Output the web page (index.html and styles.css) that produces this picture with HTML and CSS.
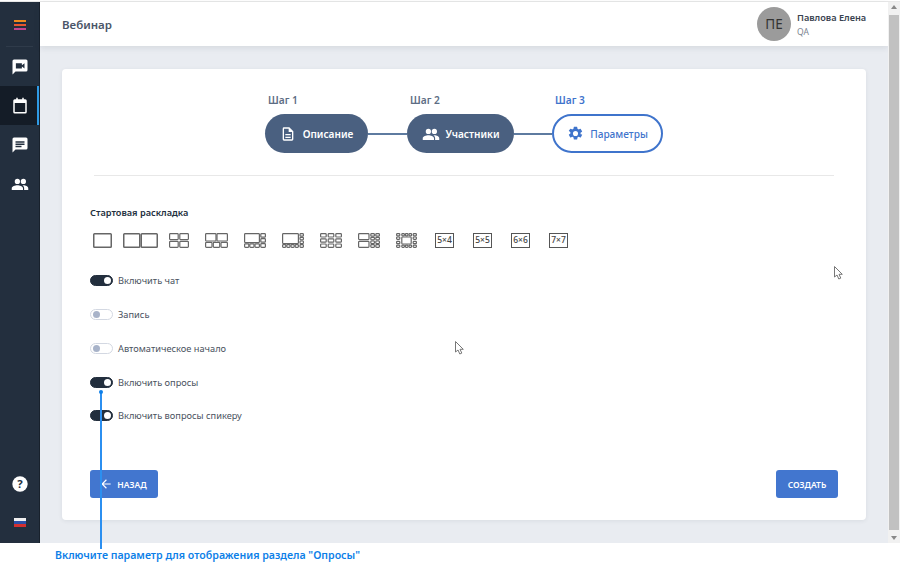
FILE: index.html
```html
<!DOCTYPE html>
<html lang="ru">
<head>
<meta charset="utf-8">
<title>Вебинар</title>
<link rel="stylesheet" href="styles.css">
</head>
<body>
<div class="app">
  <aside class="sidebar">
    <div class="burger"><i class="b1"></i><i class="b2"></i><i class="b3"></i></div>
    <nav class="nav">
      <a class="nav-item"><svg viewBox="0 0 24 24" class="ico"><path d="M4 2h16a2 2 0 0 1 2 2v12a2 2 0 0 1-2 2H6l-4 4V4a2 2 0 0 1 2-2zm2.500 5v7h8v-2.600l3.500 2.600V7l-3.500 2.600V7z" fill-rule="evenodd"/></svg></a>
      <a class="nav-item active"><svg viewBox="0 0 24 24" class="ico"><path d="M7 1h2v2h6V1h2v2h2a2 2 0 0 1 2 2v15a2 2 0 0 1-2 2H5a2 2 0 0 1-2-2V5a2 2 0 0 1 2-2h2zM5 8v12h14V8z" fill-rule="evenodd"/></svg></a>
      <a class="nav-item"><svg viewBox="0 0 24 24" class="ico"><path d="M4 2h16a2 2 0 0 1 2 2v12a2 2 0 0 1-2 2H6l-4 4V4a2 2 0 0 1 2-2zm2 5v2h12V7zm0 3v2h12v-2zm0 3v2h8v-2z" fill-rule="evenodd"/></svg></a>
      <a class="nav-item"><svg viewBox="0 0 24 24" class="ico"><path d="M8.500 5a3.500 3.500 0 1 1 0 7 3.500 3.500 0 0 1 0-7zm8 0a3.300 3.300 0 1 1 0 7 3.300 3.300 0 0 1 0-7zM8.500 13.500c2.900 0 7.500 1.400 7.500 4V20H1v-2.500c0-2.600 4.600-4 7.500-4zm8 0c2.900 0 6.500 1.400 6.500 4V20h-5.500v-2.500c0-1.600-.9-2.900-2.300-3.800.6-.1 1.200-.2 1.300-.2z"/></svg></a>
    </nav>
    <div class="side-bottom">
      <a class="nav-item small"><svg viewBox="0 0 24 24" class="ico help"><circle cx="12" cy="12" r="11.500" fill="#fff"/><text x="12" y="18" text-anchor="middle" class="qmark">?</text></svg></a>
      <a class="nav-item small"><span class="flag"><i class="f1"></i><i class="f2"></i><i class="f3"></i></span></a>
    </div>
  </aside>

  <div class="main">
    <header class="topbar">
      <h1 class="title">Вебинар</h1>
      <div class="user">
        <div class="avatar">ПЕ</div>
        <div class="user-text">
          <div class="user-name">Павлова Елена</div>
          <div class="user-role">QA</div>
        </div>
      </div>
    </header>
    <main class="content">
      <section class="card">
        <div class="steps">
          <div class="step">
            <div class="step-label">Шаг 1</div>
            <div class="pill w1"><svg viewBox="0 0 24 24" class="pill-ico"><path d="M6 2h8l6 6v12a2 2 0 0 1-2 2H6a2 2 0 0 1-2-2V4a2 2 0 0 1 2-2zm0 2v16h12V9h-5V4zm2 8h8v2H8zm0 4h8v2H8z" fill-rule="evenodd"/></svg>Описание</div>
          </div>
          <div class="connector"></div>
          <div class="step">
            <div class="step-label">Шаг 2</div>
            <div class="pill w2"><svg viewBox="0 0 24 24" class="pill-ico wide"><path d="M8.500 5a3.500 3.500 0 1 1 0 7 3.500 3.500 0 0 1 0-7zm8 0a3.300 3.300 0 1 1 0 7 3.300 3.300 0 0 1 0-7zM8.500 13.500c2.900 0 7.500 1.400 7.500 4V20H1v-2.500c0-2.600 4.600-4 7.500-4zm8 0c2.900 0 6.500 1.400 6.500 4V20h-5.500v-2.500c0-1.600-.9-2.900-2.300-3.800.6-.1 1.200-.2 1.300-.2z"/></svg>Участники</div>
          </div>
          <div class="connector short"></div>
          <div class="step current">
            <div class="step-label">Шаг 3</div>
            <div class="pill w3"><svg viewBox="0 0 24 24" class="pill-ico gear"><path d="M19.140 12.940a7.500 7.500 0 0 0 0-1.880l2.030-1.580a.5.500 0 0 0 .12-.64l-1.920-3.320a.5.500 0 0 0-.6-.22l-2.390.96a7 7 0 0 0-1.620-.94l-.36-2.540a.5.500 0 0 0-.5-.42h-3.840a.5.500 0 0 0-.5.420l-.36 2.540a7 7 0 0 0-1.620.94l-2.390-.96a.5.500 0 0 0-.6.220L2.690 7.840a.5.500 0 0 0 .12.640l2.030 1.580a7.500 7.500 0 0 0 0 1.880l-2.030 1.580a.5.500 0 0 0-.12.640l1.920 3.320a.5.500 0 0 0 .6.220l2.390-.96c.5.380 1.040.700 1.620.94l.36 2.540a.5.500 0 0 0 .5.420h3.840a.5.500 0 0 0 .5-.42l.36-2.540a7 7 0 0 0 1.620-.94l2.390.96a.5.500 0 0 0 .6-.22l1.920-3.320a.5.500 0 0 0-.12-.64zM12 15.600a3.600 3.600 0 1 1 0-7.200 3.600 3.600 0 0 1 0 7.200z"/></svg>Параметры</div>
          </div>
        </div>
        <hr class="divider">
        <div class="layout-title">Стартовая раскладка</div>
        <div class="layouts">
          <svg class="lay tight" width="19" height="15" viewBox="0 0 19 15"><rect x=".75" y=".75" width="17.500" height="13.500"/></svg>
          <svg class="lay tight" width="35" height="15" viewBox="0 0 35 15"><rect x=".75" y=".75" width="16" height="13.500"/><rect x="18.250" y=".75" width="16" height="13.500"/></svg>
          <svg class="lay" width="20" height="15" viewBox="0 0 20 15"><rect x=".6" y=".6" width="8.600" height="6"/><rect x="10.800" y=".6" width="8.600" height="6"/><rect x=".6" y="8.400" width="8.600" height="6"/><rect x="10.800" y="8.400" width="8.600" height="6"/></svg>
          <svg class="lay" width="23" height="15" viewBox="0 0 23 15"><rect x=".6" y=".6" width="10.400" height="7.400"/><rect x="12" y=".6" width="10.400" height="7.400"/><rect x=".6" y="9.400" width="6.400" height="5"/><rect x="8.300" y="9.400" width="6.400" height="5"/><rect x="16" y="9.400" width="6.400" height="5"/></svg>
          <svg class="lay" width="22" height="15" viewBox="0 0 22 15"><rect x=".6" y=".6" width="14.800" height="9"/><rect x="16.800" y=".6" width="4.600" height="3.600"/><rect x="16.800" y="5.600" width="4.600" height="3.600"/><rect x="16.800" y="10.600" width="4.600" height="3.800"/><rect x=".6" y="10.800" width="4.200" height="3.600"/><rect x="5.800" y="10.800" width="4.200" height="3.600"/><rect x="11" y="10.800" width="4.400" height="3.600"/></svg>
          <svg class="lay" width="22" height="15" viewBox="0 0 22 15"><rect x=".6" y=".6" width="15.800" height="10"/><rect x="18" y=".6" width="3.400" height="2.600"/><rect x="18" y="4.300" width="3.400" height="2.600"/><rect x="18" y="8" width="3.400" height="2.600"/><rect x="18" y="11.700" width="3.400" height="2.700"/><rect x=".6" y="11.700" width="3.200" height="2.700"/><rect x="4.800" y="11.700" width="3.200" height="2.700"/><rect x="9" y="11.700" width="3.200" height="2.700"/><rect x="13.200" y="11.700" width="3.200" height="2.700"/></svg>
          <svg class="lay" width="22" height="15" viewBox="0 0 22 15"><rect x=".6" y=".6" width="5.600" height="3.400"/><rect x="8.200" y=".6" width="5.600" height="3.400"/><rect x="15.800" y=".6" width="5.600" height="3.400"/><rect x=".6" y="5.800" width="5.600" height="3.400"/><rect x="8.200" y="5.800" width="5.600" height="3.400"/><rect x="15.800" y="5.800" width="5.600" height="3.400"/><rect x=".6" y="11" width="5.600" height="3.400"/><rect x="8.200" y="11" width="5.600" height="3.400"/><rect x="15.800" y="11" width="5.600" height="3.400"/></svg>
          <svg class="lay" width="22" height="15" viewBox="0 0 22 15"><rect x=".6" y=".6" width="10.400" height="6"/><rect x=".6" y="8.400" width="10.400" height="6"/><rect x="12.800" y=".6" width="3.600" height="2.600"/><rect x="17.800" y=".6" width="3.600" height="2.600"/><rect x="12.800" y="4.300" width="3.600" height="2.600"/><rect x="17.800" y="4.300" width="3.600" height="2.600"/><rect x="12.800" y="8" width="3.600" height="2.600"/><rect x="17.800" y="8" width="3.600" height="2.600"/><rect x="12.800" y="11.700" width="3.600" height="2.700"/><rect x="17.800" y="11.700" width="3.600" height="2.700"/></svg>
          <svg class="lay wide-gap" width="21" height="15" viewBox="0 0 21 15"><rect x="5.800" y="4" width="9.400" height="7"/><rect x=".6" y=".6" width="3.200" height="2.300"/><rect x="5.800" y=".6" width="2.600" height="2.300"/><rect x="9.400" y=".6" width="2.600" height="2.300"/><rect x="13" y=".6" width="2.600" height="2.300"/><rect x="17.200" y=".6" width="3.200" height="2.300"/><rect x=".6" y="4" width="3.200" height="2.300"/><rect x="17.200" y="4" width="3.200" height="2.300"/><rect x=".6" y="8.400" width="3.200" height="2.300"/><rect x="17.200" y="8.400" width="3.200" height="2.300"/><rect x=".6" y="12.100" width="3.200" height="2.300"/><rect x="5.800" y="12.100" width="2.600" height="2.300"/><rect x="9.400" y="12.100" width="2.600" height="2.300"/><rect x="13" y="12.100" width="2.600" height="2.300"/><rect x="17.200" y="12.100" width="3.200" height="2.300"/></svg>
          <div class="lay-text">5×4</div>
          <div class="lay-text">5×5</div>
          <div class="lay-text">6×6</div>
          <div class="lay-text">7×7</div>
        </div>
        <div class="toggles">
          <label class="row"><span class="switch on"></span>Включить чат</label>
          <label class="row"><span class="switch"></span>Запись</label>
          <label class="row"><span class="switch"></span>Автоматическое начало</label>
          <label class="row"><span class="switch on"></span>Включить опросы</label>
          <label class="row"><span class="switch on"></span>Включить вопросы спикеру</label>
        </div>
        <div class="actions">
          <button class="btn back"><svg viewBox="0 0 24 24" class="arrow"><path d="M20 11H7.800l5.600-5.600L12 4l-8 8 8 8 1.400-1.400L7.800 13H20z"/></svg>НАЗАД</button>
          <button class="btn create">СОЗДАТЬ</button>
        </div>
      </section>
    </main>
  </div>

  <div class="scrollbar">
    <span class="arr up"></span>
    <div class="thumb"></div>
    <span class="arr down"></span>
  </div>
</div>
<p class="note">Включите параметр для отображения раздела "Опросы"</p>

<div class="callout"></div>
<svg class="cursor c1" width="10" height="14" viewBox="0 0 10 14"><path d="M.5.500v10.500l2.500-2 1.800 4 2-.9-1.800-3.800h3.300z"/></svg>
<svg class="cursor c2" width="10" height="14" viewBox="0 0 10 14"><path d="M.5.500v10.500l2.500-2 1.800 4 2-.9-1.800-3.800h3.300z"/></svg>
</body>
</html>
```
FILE: styles.css
```css
* { box-sizing: border-box; }
html, body { margin: 0; padding: 0; }
body {
  width: 900px;
  height: 566px;
  overflow: hidden;
  position: relative;
  background: #fff;
  font-family: "Noto Sans", "Open Sans", sans-serif;
  color: #2c3a4b;
}
.app {
  display: flex;
  height: 542px;
  margin-top: 1px;
  border-top: 1px solid #e8e8e8;
}
.sidebar {
  width: 40px;
  flex: none;
  background: #232f3e;
  border-right: 1px solid #18212c;
  display: flex;
  flex-direction: column;
}
.burger {
  height: 45px;
  padding-top: 18px;
  display: flex;
  flex-direction: column;
  align-items: center;
  gap: 2px;
  position: relative;
}
.burger::after {
  content: "";
  position: absolute;
  left: 6px;
  right: 6px;
  bottom: 0;
  height: 1px;
  background: #2f3b4a;
}
.burger i { display: block; width: 12px; height: 2px; margin-left: 1px; }
.b1 { background: #ee8a1d; }
.b2 { background: #e4572e; }
.b3 { background: #c2458f; }
.nav { display: flex; flex-direction: column; }
.nav-item {
  height: 39px;
  display: flex;
  align-items: center;
  justify-content: center;
}
.nav-item.active {
  background: #141c27;
  border-right: 2px solid #2f9be6;
  padding-left: 2px;
}
.ico { width: 18px; height: 18px; fill: #fff; }
.help { width: 16px; height: 16px; }
.qmark { font: 700 17px "Noto Sans", sans-serif; fill: #232f3e; }
.side-bottom { margin-top: auto; display: flex; flex-direction: column; padding-bottom: 1px; }
.flag { width: 12px; height: 9px; display: flex; flex-direction: column; }
.flag i { flex: 1; }
.f1 { background: #f0f0f0; }
.f2 { background: #2b4fa8; }
.f3 { background: #d32f2f; }

.main { flex: 1; min-width: 0; display: flex; flex-direction: column; background: #e9ecf1; }
.topbar {
  height: 44px;
  flex: none;
  background: #fff;
  display: flex;
  align-items: center;
  justify-content: space-between;
  padding: 0 22px;
  box-shadow: 0 2px 6px rgba(40, 50, 70, .1);
}
.title { margin: 0; font-size: 11.500px; font-weight: 600; color: #4a5568; }
.user { display: flex; align-items: center; gap: 6px; }
.avatar {
  width: 34px;
  height: 34px;
  border-radius: 50%;
  background: #9b9b9b;
  color: #333;
  font-size: 13.500px;
  display: flex;
  align-items: center;
  justify-content: center;
}
.user-text { width: 69px; white-space: nowrap; }
.user-name { font-size: 9.200px; font-weight: 600; color: #3a4350; line-height: 13px; }
.user-role { font-size: 8.500px; color: #7a8390; line-height: 12px; margin-top: 2px; }

.content { flex: 1; padding: 23px 22px; }
.card {
  height: 451px;
  background: #fff;
  border-radius: 4px;
  box-shadow: 0 1px 4px rgba(40, 50, 70, .08);
  padding: 24px 28px 22px;
  display: flex;
  flex-direction: column;
}
.steps { display: flex; justify-content: center; align-items: flex-end; }
.step-label {
  font-size: 10.200px;
  font-weight: 600;
  color: #5d6d84;
  line-height: 14px;
  margin: 0 0 7px 3px;
}
.current .step-label { color: #3f74cc; }
.pill {
  height: 39px;
  border-radius: 20px;
  background: #4a6080;
  color: #fff;
  font-size: 10.100px;
  font-weight: 600;
  display: flex;
  align-items: center;
  justify-content: center;
  gap: 7px;
}
.w1 { width: 103px; }
.w2 { width: 107px; gap: 6px; }
.w3 { width: 111px; background: #fff; border: 2px solid #3f74cc; color: #3f74cc; font-weight: 500; gap: 6px; }
.pill-ico { width: 16px; height: 16px; fill: #fff; }
.pill-ico.wide { width: 18px; height: 18px; }
.pill-ico.gear { fill: #3f74cc; width: 17px; height: 17px; }
.connector { width: 39px; height: 2px; background: #5e7ba0; margin-bottom: 18px; flex: none; }
.connector.short { width: 38px; }
.divider { border: 0; height: 1px; background: #e8e8e8; width: 740px; margin: 22px 0 0 4px; flex: none; }
.layout-title { font-size: 9.200px; font-weight: 600; color: #232f3e; line-height: 13px; margin-top: 30px; }
.layouts { display: flex; align-items: center; gap: 16px; margin: 14px 0 0 3px; height: 15px; }
.lay { fill: none; stroke: #666; stroke-width: 1.200; flex: none; }
.lay rect { rx: .8px; }
.lay.tight { margin-right: -5px; stroke-width: 1.500; }
.lay.wide-gap { margin-right: 2px; }
.lay-text {
  width: 19px;
  height: 15px;
  border: 1.500px solid #555;
  margin-right: 3px;
  font-size: 8.500px;
  font-weight: 500;
  color: #444;
  display: flex;
  align-items: center;
  justify-content: center;
  line-height: 1;
  flex: none;
}
.toggles { display: flex; flex-direction: column; gap: 20.850px; margin-top: 26px; }
.row { display: flex; align-items: center; gap: 5px; height: 13px; font-size: 9.250px; color: #4a5260; line-height: 13px; }
.switch {
  width: 23px;
  height: 11px;
  border-radius: 6px;
  background: #fff;
  border: 1px solid #d3d8e2;
  position: relative;
  flex: none;
}
.switch::after {
  content: "";
  position: absolute;
  left: 2px;
  top: 1px;
  width: 7px;
  height: 7px;
  border-radius: 50%;
  background: #a8b3c9;
}
.switch.on { background: #232f3e; border-color: #232f3e; }
.switch.on::after { left: 13px; background: #fff; }
.actions { display: flex; justify-content: space-between; margin-top: auto; }
.btn {
  height: 28px;
  border: 0;
  border-radius: 3px;
  background: #4276cf;
  color: #fff;
  font-family: inherit;
  font-size: 8.500px;
  font-weight: 600;
  display: flex;
  align-items: center;
  justify-content: center;
  padding: 0;
}
.back { width: 68px; gap: 4px; padding-right: 2px; }
.create { width: 62px; }
.arrow { width: 14px; height: 14px; fill: #fff; }

.scrollbar {
  width: 12px;
  flex: none;
  background: #f1f1f1;
  display: flex;
  flex-direction: column;
  align-items: center;
  justify-content: space-between;
}
.thumb { width: 10px; flex: 1; margin: 3px 0; background: #c1c1c1; }
.arr { width: 0; height: 0; border-left: 3px solid transparent; border-right: 3px solid transparent; margin: 3px 0; }
.up { border-bottom: 4px solid #888; }
.down { border-top: 4px solid #888; }

.note {
  margin: 5px 0 0 55px;
  font-size: 10.600px;
  font-weight: 600;
  line-height: 14px;
  color: #0d7fe8;
}
.callout {
  position: absolute;
  left: 100px;
  top: 392px;
  width: 2px;
  height: 157px;
  background: #2b8ff0;
}
.callout::before {
  content: "";
  position: absolute;
  left: -1px;
  top: -2px;
  width: 4px;
  height: 4px;
  border-radius: 50%;
  background: #0d7fe8;
}
.cursor { position: absolute; fill: #fff; stroke: #777; stroke-width: 1; }
.c1 { left: 834px; top: 266px; }
.c2 { left: 455px; top: 341px; }
```
